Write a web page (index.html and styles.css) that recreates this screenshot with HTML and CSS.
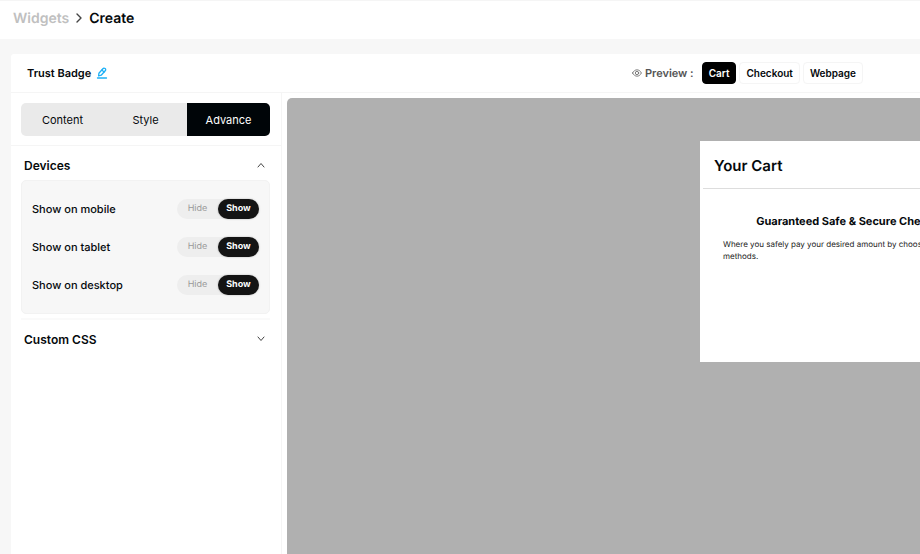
FILE: index.html
```
<!DOCTYPE html>
<html lang="en">

<head>
    <meta charset="UTF-8">
    <meta name="viewport" content="width=device-width, initial-scale=1.0">
    <title>Create Widget</title>
    <link rel="stylesheet" href="styles.css">
</head>

<body>
    <nav class="breadcrumb">
        <a href="#">Widgets</a>
        <svg class="crumb-arrow" viewBox="0 0 8 10" width="8" height="10"><path d="M2 1l4 4-4 4"/></svg>
        <span>Create</span>
    </nav>

    <main class="builder">
        <header class="builder-header">
            <h1>Trust Badge</h1>
            <button class="edit-btn" aria-label="Edit name">
                <svg viewBox="0 0 12 12" width="12" height="12">
                    <path d="M1.5 11h9"/>
                    <path d="M2.6 8.8l.3-2.6 4-4.5c.7-.8 1.4-.8 2.2-.1.8.7.8 1.4.1 2.2l-4 4.4z"/>
                    <path d="M6.2 2.7c.3 1.3 1.1 2.1 2.3 2.2"/>
                </svg>
            </button>
            <div class="preview">
                <svg class="eye" viewBox="0 0 12 12" width="10" height="10">
                    <path d="M.7 6C2 3.5 3.8 2.2 6 2.2S10 3.5 11.3 6C10 8.5 8.2 9.8 6 9.8S2 8.5.7 6z"/>
                    <circle cx="6" cy="6" r="2"/>
                </svg>
                <span class="preview-label">Preview :</span>
                <button class="active">Cart</button>
                <button>Checkout</button>
                <button>Webpage</button>
            </div>
        </header>

        <div class="builder-body">
            <aside class="sidebar">
                <div class="tabs">
                    <button>Content</button>
                    <button>Style</button>
                    <button class="active">Advance</button>
                </div>

                <div class="sections">
                    <section class="section">
                        <button class="section-title" aria-expanded="true">
                            Devices
                            <svg viewBox="0 0 8 6" width="8" height="6"><path d="M1 5l3-3.5L7 5"/></svg>
                        </button>
                        <div class="options">
                            <fieldset class="option">
                                <legend>Show on mobile</legend>
                                <div class="switch">
                                    <input type="radio" name="mobile" id="mobileHide">
                                    <label for="mobileHide">Hide</label>
                                    <input type="radio" name="mobile" id="mobileShow" checked>
                                    <label for="mobileShow">Show</label>
                                </div>
                            </fieldset>
                            <fieldset class="option">
                                <legend>Show on tablet</legend>
                                <div class="switch">
                                    <input type="radio" name="tablet" id="tabletHide">
                                    <label for="tabletHide">Hide</label>
                                    <input type="radio" name="tablet" id="tabletShow" checked>
                                    <label for="tabletShow">Show</label>
                                </div>
                            </fieldset>
                            <fieldset class="option">
                                <legend>Show on desktop</legend>
                                <div class="switch">
                                    <input type="radio" name="desktop" id="desktopHide">
                                    <label for="desktopHide">Hide</label>
                                    <input type="radio" name="desktop" id="desktopShow" checked>
                                    <label for="desktopShow">Show</label>
                                </div>
                            </fieldset>
                        </div>
                    </section>

                    <section class="section">
                        <button class="section-title" aria-expanded="false">
                            Custom CSS
                            <svg viewBox="0 0 8 6" width="8" height="6"><path d="M1 1l3 3.5L7 1"/></svg>
                        </button>
                    </section>
                </div>
            </aside>

            <div class="stage">
                <div class="cart">
                    <h2>Your Cart</h2>
                    <div class="badge">
                        <h3>Guaranteed Safe &amp; Secure Checkout</h3>
                        <p>Where you safely pay your desired amount by choosing our payment methods.</p>
                    </div>
                </div>
            </div>
        </div>
    </main>
</body>

</html>
```
FILE: styles.css
```
:root {
    --bg-color: #f7f7f7;
    --line: #f5f5f5;
    --text-color: #05090c;
    --black: #000508;
    --stage: #b0b0b0;
}

* {
    margin: 0;
    padding: 0;
    box-sizing: border-box;
}

body {
    font-family: Inter, "Liberation Sans", sans-serif;
    text-rendering: geometricPrecision;
    background: var(--bg-color);
    color: var(--text-color);
    min-height: 100vh;
    display: flex;
    flex-direction: column;
    overflow: hidden;
}

button {
    font: inherit;
    color: inherit;
    background: none;
    border: none;
    cursor: pointer;
}

svg {
    fill: none;
    stroke: #444;
    stroke-linecap: round;
    stroke-linejoin: round;
}

/* Breadcrumb */
.breadcrumb {
    display: flex;
    align-items: center;
    gap: 6px;
    height: 39px;
    padding: 0 13px 4px;
    background: #fff;
    border-top: 1px solid var(--line);
    font-size: 14px;
    font-weight: 600;
}

.crumb-arrow {
    stroke-width: 1.4;
}

.breadcrumb a {
    color: #c0c0c0;
    text-decoration: none;
}

/* Builder */
.builder {
    flex: 1;
    display: flex;
    flex-direction: column;
    margin: 15px 0 0 11px;
    background: #fff;
    border-top-left-radius: 3px;
}

.builder-header {
    display: flex;
    align-items: center;
    height: 39px;
    padding: 0 57px 0 16px;
    border-bottom: 1px solid var(--line);
}

.builder-header h1 {
    font-size: 11px;
    font-weight: 600;
}

.edit-btn {
    display: flex;
    margin-left: 5px;
}

.edit-btn svg {
    stroke: #1cb0f6;
    stroke-width: 1.3;
}

.preview {
    display: flex;
    align-items: center;
    gap: 3px;
    margin-left: auto;
    font-size: 10px;
    font-weight: 600;
}

.eye {
    stroke: #666;
}

.preview-label {
    margin-right: 5px;
    font-size: 11px;
    color: #555;
}

.preview button {
    height: 22px;
    padding: 0 6px;
    border: 1px solid var(--line);
    border-radius: 4px;
}

.preview button.active {
    background: #000;
    border-color: #000;
    color: #fff;
}

.builder-body {
    flex: 1;
    display: flex;
}

/* Sidebar */
.sidebar {
    flex: 0 0 271px;
    border-right: 1px solid var(--line);
}

.tabs {
    display: flex;
    margin: 10px 11px 9px 10px;
    border-radius: 5px;
    overflow: hidden;
    background: #eaeaea;
    font-size: 11px;
}

.tabs button {
    flex: 1;
    height: 33px;
}

.tabs button.active {
    background: var(--black);
    color: #fff;
}

.sections {
    border-top: 1px solid var(--line);
    padding: 0 11px 0 10px;
}

.section + .section {
    margin-top: 4px;
    border-top: 2px solid #fafafa;
}

.section-title {
    display: flex;
    align-items: center;
    justify-content: space-between;
    width: 100%;
    height: 38px;
    padding: 0 5px 0 3px;
    font-size: 12px;
    font-weight: 600;
}

.options {
    display: flex;
    flex-direction: column;
    gap: 18px;
    margin-top: -4px;
    padding: 18px 10px;
    background: var(--bg-color);
    border: 1px solid #f2f2f2;
    border-radius: 5px;
}

.option {
    display: flex;
    align-items: center;
    justify-content: flex-end;
    border: none;
}

.option legend {
    float: left;
    margin-right: auto;
    font-size: 11px;
    font-weight: 500;
}

.switch {
    display: flex;
    height: 20px;
    border-radius: 10px;
    background: #eee;
    font-size: 9px;
}

.switch input {
    position: absolute;
    opacity: 0;
}

.switch label {
    width: 41px;
    border-radius: 10px;
    line-height: 20px;
    text-align: center;
    color: #999;
    cursor: pointer;
}

.switch input:checked + label {
    background: #141414;
    color: #fff;
    font-weight: 700;
    box-shadow: 0 0 2px rgba(0, 0, 0, 0.3);
}

/* Preview stage, the cart drawer slides past its right edge */
.stage {
    flex: 1;
    min-width: 0;
    display: flex;
    justify-content: flex-end;
    align-items: flex-start;
    margin: 5px 0 0 5px;
    padding-top: 43px;
    background: var(--stage);
    border-top-left-radius: 5px;
    overflow: hidden;
}

.cart {
    flex: 0 0 302px;
    min-height: 221px;
    margin-right: -82px;
    padding: 0 3px;
    background: #fff;
}

.cart h2 {
    padding: 2px 11px 0;
    border-bottom: 1px solid #ddd;
    font-size: 15px;
    font-weight: 600;
    line-height: 45px;
}

.badge {
    padding: 24px 15px 24px 20px;
}

.badge h3 {
    font-size: 11px;
    font-weight: 700;
    line-height: 16px;
    text-align: center;
}

.badge p {
    margin-top: 9px;
    font-size: 8px;
    line-height: 12px;
    color: #222;
}
```
